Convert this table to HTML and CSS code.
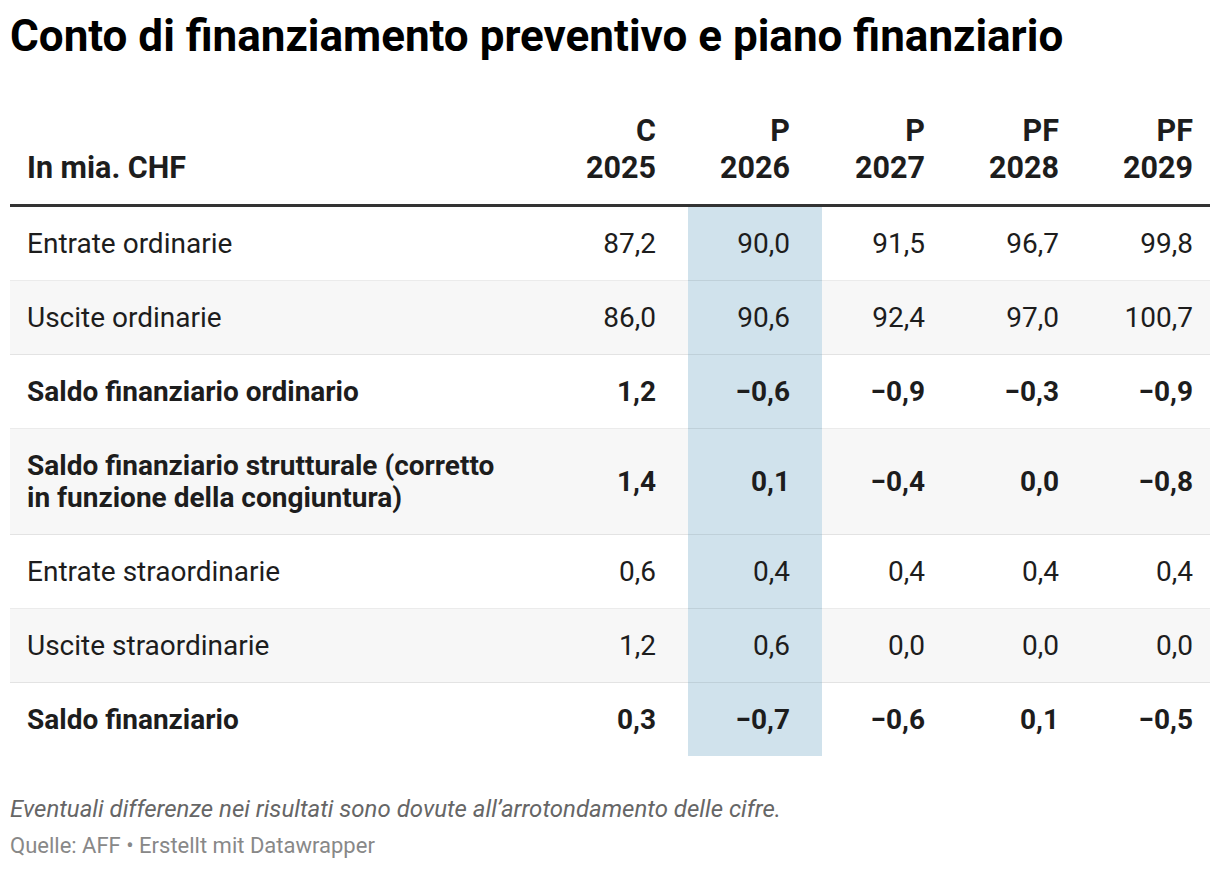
FILE: index.html
```html
<!DOCTYPE html>
<html lang="it">
<head>
<meta charset="utf-8">
<title>Conto di finanziamento preventivo e piano finanziario</title>
<link rel="stylesheet" href="styles.css">
</head>
<body>
<div class="chart">
  <h1 class="title">Conto di finanziamento preventivo e piano finanziario</h1>
  <table class="tbl">
    <colgroup>
      <col class="c-label">
      <col class="c-wide">
      <col class="c-narrow">
      <col class="c-wide">
      <col class="c-narrow">
      <col class="c-last">
    </colgroup>
    <thead>
      <tr>
        <th class="label">In mia. CHF</th>
        <th class="num">C<br>2025</th>
        <th class="num">P<br>2026</th>
        <th class="num">P<br>2027</th>
        <th class="num">PF<br>2028</th>
        <th class="num last">PF<br>2029</th>
      </tr>
    </thead>
    <tbody>
      <tr>
        <td class="label">Entrate ordinarie</td>
        <td class="num">87,2</td><td class="num hl">90,0</td><td class="num">91,5</td><td class="num">96,7</td><td class="num last">99,8</td>
      </tr>
      <tr class="stripe">
        <td class="label">Uscite ordinarie</td>
        <td class="num">86,0</td><td class="num hl">90,6</td><td class="num">92,4</td><td class="num">97,0</td><td class="num last">100,7</td>
      </tr>
      <tr class="bold">
        <td class="label">Saldo finanziario ordinario</td>
        <td class="num">1,2</td><td class="num hl">−0,6</td><td class="num">−0,9</td><td class="num">−0,3</td><td class="num last">−0,9</td>
      </tr>
      <tr class="stripe bold">
        <td class="label">Saldo finanziario strutturale (corretto<br>in funzione della congiuntura)</td>
        <td class="num">1,4</td><td class="num hl">0,1</td><td class="num">−0,4</td><td class="num">0,0</td><td class="num last">−0,8</td>
      </tr>
      <tr>
        <td class="label">Entrate straordinarie</td>
        <td class="num">0,6</td><td class="num hl">0,4</td><td class="num">0,4</td><td class="num">0,4</td><td class="num last">0,4</td>
      </tr>
      <tr class="stripe">
        <td class="label">Uscite straordinarie</td>
        <td class="num">1,2</td><td class="num hl">0,6</td><td class="num">0,0</td><td class="num">0,0</td><td class="num last">0,0</td>
      </tr>
      <tr class="bold final">
        <td class="label">Saldo finanziario</td>
        <td class="num">0,3</td><td class="num hl">−0,7</td><td class="num">−0,6</td><td class="num">0,1</td><td class="num last">−0,5</td>
      </tr>
    </tbody>
  </table>
  <p class="note">Eventuali differenze nei risultati sono dovute all’arrotondamento delle cifre.</p>
  <p class="source">Quelle: AFF • Erstellt mit Datawrapper</p>
</div>
</body>
</html>
```

FILE: styles.css
```css
* { box-sizing: border-box; }

body {
  margin: 0;
  background: #ffffff;
  font-family: Roboto, "Liberation Sans", sans-serif;
  color: #1d1d1d;
}

.chart {
  padding: 10px 10px 0 10px;
}

.title {
  margin: 0;
  font-size: 44px;
  line-height: 52px;
  font-weight: 700;
  color: #000;
}

.tbl {
  margin-top: 50px;
  width: 1200px;
  border-collapse: collapse;
  table-layout: fixed;
}

.c-label { width: 543px; }
.c-wide { width: 135px; }
.c-narrow { width: 134px; }
.c-last { width: 119px; }

.tbl th {
  font-size: 30.5px;
  line-height: 37px;
  font-weight: 700;
  color: #1d1d1d;
  vertical-align: bottom;
  padding: 0 32px 18px 0;
  border-bottom: 3px solid #333;
}

.tbl th.label {
  text-align: left;
  padding-left: 17px;
}

.tbl td {
  font-size: 28px;
  line-height: 32px;
  padding: 21px 32px 20px 0;
  border-bottom: 1px solid rgba(0, 0, 0, 0.08);
  vertical-align: middle;
}

.tbl .label {
  text-align: left;
  padding-left: 17px;
}

.tbl .num {
  text-align: right;
}

.tbl .last {
  padding-right: 17px;
}

.tbl tr.stripe td {
  background: #f7f7f7;
}

.tbl td.hl,
.tbl tr.stripe td.hl {
  background: #d0e2ec;
}

.tbl tr.bold td {
  font-weight: 700;
}

.tbl tr.final td {
  border-bottom: none;
}

.note {
  margin: 38px 0 0 0;
  font-size: 24px;
  line-height: 30px;
  font-style: italic;
  color: #666;
}

.source {
  margin: 8px 0 0 0;
  font-size: 22px;
  line-height: 28px;
  color: #888;
}
```
